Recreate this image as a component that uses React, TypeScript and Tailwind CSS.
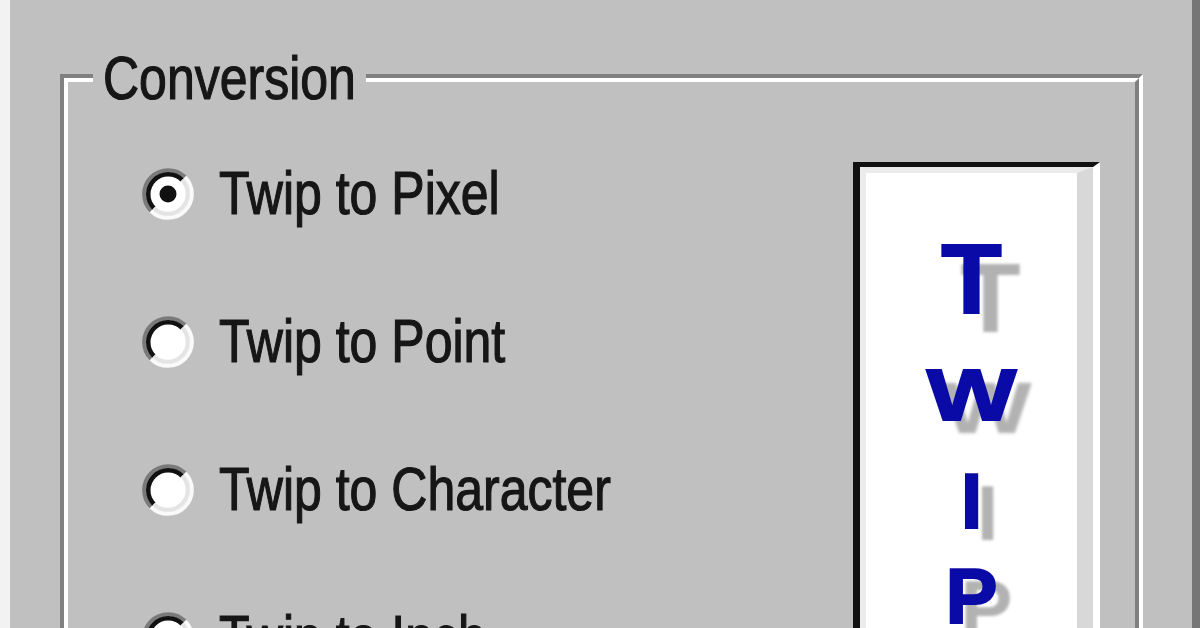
const OPTIONS = [
  { label: "Twip to Pixel", checked: true },
  { label: "Twip to Point", checked: false },
  { label: "Twip to Character", checked: false },
  { label: "Twip to Inch", checked: false },
];

function Radio({ checked }: { checked?: boolean }) {
  return (
    <svg width="52" height="52" viewBox="0 0 52 52" className="shrink-0">
      <circle cx="26" cy="26" r="22" fill="#fff" />
      <path d="M9.03 42.97 A24 24 0 0 1 42.97 9.03" stroke="#7a7a7a" strokeWidth="4" fill="none" />
      <path d="M42.97 9.03 A24 24 0 0 1 9.03 42.97" stroke="#fafafa" strokeWidth="4" fill="none" />
      <path d="M11.86 40.14 A20 20 0 0 1 40.14 11.86" stroke="#111" strokeWidth="4.5" fill="none" />
      <path d="M40.14 11.86 A20 20 0 0 1 11.86 40.14" stroke="#e4e4e4" strokeWidth="4" fill="none" />
      {checked && <circle cx="26" cy="26" r="8.5" fill="#111" />}
    </svg>
  );
}

function TwipBox() {
  return (
    <div className="mr-[35px] mt-[80px] w-[247px] shrink-0 self-start border-b-[7px] border-l-[7px] border-r-[7px] border-t-[5px] border-b-white border-l-[#111] border-r-white border-t-[#111]">
      <div className="flex flex-col items-center border-b-[16px] border-l-[6px] border-r-[16px] border-t-[6px] border-b-[#d8d8d8] border-l-[#ebebeb] border-r-[#d8d8d8] border-t-[#ebebeb] bg-white pb-[40px] font-bold text-[#0a0aa6] [-webkit-text-stroke:2px_#0a0aa6]">
        <div className="mt-[56px] h-[99px] text-[99px] leading-none [text-shadow:19px_19px_3px_#b2b2b2]">T</div>
        <div className="mt-[30px] h-[73px] text-[73px] leading-none">
          <span className="inline-block scale-x-[1.3] [text-shadow:12px_13px_3px_#b2b2b2]">W</span>
        </div>
        <div className="mt-[31px] h-[78px] text-[78px] leading-none [text-shadow:16px_12px_3px_#b2b2b2]">I</div>
        <div className="mt-[17px] h-[78px] text-[78px] leading-none [text-shadow:15px_12px_3px_#b2b2b2]">P</div>
      </div>
    </div>
  );
}

export default function App() {
  return (
    <div className="flex h-[628px] w-[1200px] overflow-hidden bg-[#c0c0c0] font-['Liberation_Sans',Arial,sans-serif] text-[#161616]">
      <div className="w-[10px] shrink-0 bg-[#f2f2f2]" />
      <div className="min-w-0 flex-1 pl-[50px] pr-[49px] pt-[74px]">
        <div className="relative border-4 border-b-white border-l-[#808080] border-r-white border-t-[#808080]">
          <div className="flex justify-between border-4 border-b-[#808080] border-l-white border-r-[#808080] border-t-white">
            <div className="flex flex-col gap-[96px] pl-[74px] pt-[86px]">
              {OPTIONS.map((o) => (
                <div key={o.label} className="flex h-[52px] items-center gap-[25px]">
                  <Radio checked={o.checked} />
                  <span className="mb-[2px] text-[50px] leading-none [-webkit-text-stroke:1px_#161616]">
                    <span className="inline-block scale-y-[1.22] whitespace-nowrap">{o.label}</span>
                  </span>
                </div>
              ))}
            </div>
            <TwipBox />
          </div>
          <span className="absolute left-[29px] top-[-25px] bg-[#c0c0c0] px-[10px] text-[50px] leading-none [-webkit-text-stroke:1px_#161616]">
            <span className="inline-block scale-y-[1.22]">Conversion</span>
          </span>
        </div>
      </div>
      <div className="w-[8px] shrink-0 bg-[#767676]" />
    </div>
  );
}
